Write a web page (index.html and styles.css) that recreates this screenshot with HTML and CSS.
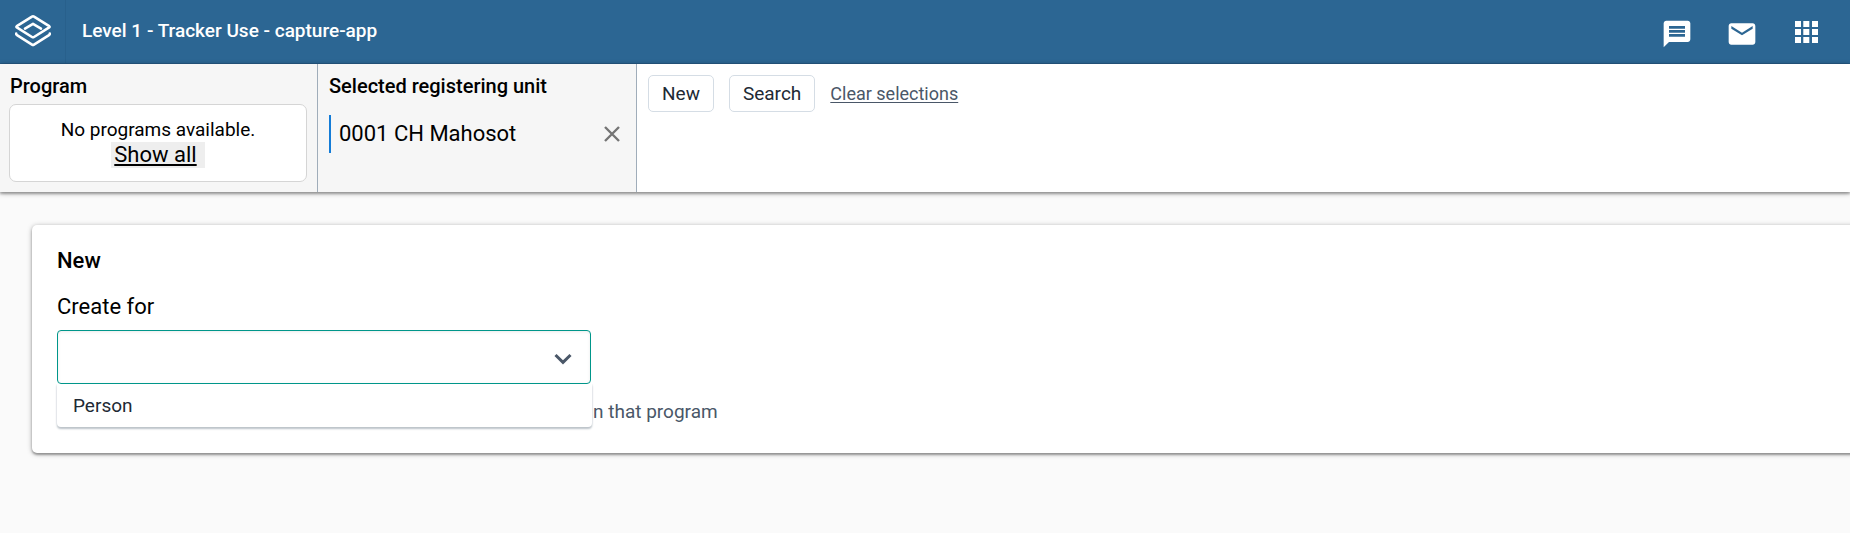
FILE: index.html
```html
<!DOCTYPE html>
<html lang="en">
<head>
<meta charset="utf-8">
<meta name="viewport" content="width=device-width, initial-scale=1">
<title>Level 1 - Tracker Use - capture-app</title>
<link rel="stylesheet" href="styles.css">
</head>
<body>
<header class="header">
  <a class="logo" href="#" aria-label="Home">
    <svg width="38" height="34" viewBox="0 0 38 34" fill="none" stroke="#fff" stroke-width="2.6" stroke-linejoin="round" stroke-linecap="round">
      <path d="M18 2.600Q19 2 20 2.600L35.200 12.200Q36 12.800 35.200 13.400L20 23Q19 23.600 18 23L2.800 13.400Q2 12.800 2.800 12.200Z"/>
      <path d="M11 14.600 19 9.800 27 14.600"/>
      <path d="M2.200 19.600Q2 20.600 3 21.200L18 30.600Q19 31.200 20 30.600L35 21.200Q36 20.600 35.800 19.600"/>
    </svg>
  </a>
  <h1 class="title">Level 1 - Tracker Use - capture-app</h1>
  <nav class="tools">
    <a class="tool" href="#" aria-label="Interpretations">
      <svg width="32" height="32" viewBox="0 0 24 24" fill="#fff"><path d="M4 2h16c1.100 0 2 .9 2 2v12c0 1.100-.9 2-2 2H6l-4 4V4c0-1.100.9-2 2-2zM6 6v2h12V6zm0 3v2h12V9zm0 3v2h12v-2z" fill-rule="evenodd"/></svg>
    </a>
    <a class="tool" href="#" aria-label="Messages">
      <svg width="32" height="32" viewBox="0 0 24 24" fill="#fff"><path d="M20 4H4c-1.100 0-2 .9-2 2v12c0 1.100.9 2 2 2h16c1.100 0 2-.9 2-2V6c0-1.100-.9-2-2-2zm0 4-8 5-8-5V6l8 5 8-5z"/></svg>
    </a>
    <button class="tool" type="button" aria-label="Apps">
      <svg width="32" height="32" viewBox="0 0 32 32" fill="#fff"><path d="M4 3h6v6H4zm8.300 0h6v6h-6zm8.700 0h6v6h-6zM4 11h6v6H4zm8.300 0h6v6h-6zm8.700 0h6v6h-6zM4 19h6v6H4zm8.300 0h6v6h-6zm8.700 0h6v6h-6z"/></svg>
    </button>
  </nav>
</header>
<section class="selector">
  <div class="cell">
    <h2 class="cell-title">Program</h2>
    <div class="no-programs">
      <span>No programs available.</span>
      <a class="show-all" href="#">Show all</a>
    </div>
  </div>
  <div class="cell">
    <h2 class="cell-title">Selected registering unit</h2>
    <div class="unit">
      <span class="unit-name">0001 CH Mahosot</span>
      <button class="clear" type="button" aria-label="Clear unit">
        <svg width="16" height="16" viewBox="0 0 16 16" fill="none" stroke="#757575" stroke-width="2.400"><path d="M1 1 15 15M15 1 1 15"/></svg>
      </button>
    </div>
  </div>
  <div class="actions">
    <button class="button" type="button">New</button>
    <button class="button" type="button">Search</button>
    <a class="clear-link" href="#">Clear selections</a>
  </div>
</section>
<main class="main">
  <section class="card">
    <h2 class="card-title">New</h2>
    <label class="label" for="type">Create for</label>
    <div class="combo">
      <input class="field" id="type" type="text" role="combobox" aria-expanded="true" aria-controls="types">
      <svg class="chevron" width="18" height="12" viewBox="0 0 18 12" fill="none" stroke="#4a5768" stroke-width="3"><path d="M1.500 2 9 9.300 16.500 2"/></svg>
      <ul class="menu" id="types" role="listbox">
        <li class="option" role="option">Person</li>
      </ul>
    </div>
    <p class="hint">n that program</p>
  </section>
</main>
</body>
</html>
```

FILE: styles.css
```css
* {
  box-sizing: border-box;
}

body {
  margin: 0;
  min-height: 100vh;
  background: #fafafa;
  color: #000;
  font-family: Roboto, "Liberation Sans", sans-serif;
  font-size: 19px;
  line-height: 24px;
  overflow-x: hidden;
}

button {
  font: inherit;
  cursor: pointer;
}

h1,
h2,
p,
ul {
  margin: 0;
  padding: 0;
}

.header {
  display: flex;
  align-items: stretch;
  height: 64px;
  background: #2c6693;
  border-bottom: 1px solid #265a84;
  color: #fff;
}

.logo {
  display: flex;
  align-items: center;
  justify-content: center;
  width: 66px;
  padding-bottom: 1px;
  border-right: 1px solid #28608c;
}

.title {
  align-self: center;
  padding: 0 0 2px 16px;
  font-size: 19px;
  font-weight: 500;
}

.tools {
  display: flex;
  align-items: center;
  gap: 33px;
  margin-left: auto;
  padding: 4px 27px 0 0;
}

.tool {
  display: flex;
  padding: 0;
  border: 0;
  background: none;
}

.selector {
  position: relative;
  display: flex;
  min-height: 128px;
  background: #fff;
  box-shadow: 0 1px 5px rgba(0, 0, 0, 0.4), 0 2px 2px rgba(0, 0, 0, 0.2);
}

.cell {
  width: 319px;
  padding: 10px 10px 10px 9px;
  background: #f6f6f6;
  border-right: 1px solid #a0adba;
}

.cell:first-child {
  width: 318px;
}

.cell-title {
  padding-left: 1px;
  font-size: 20px;
  font-weight: 500;
}

.cell + .cell .cell-title {
  padding-left: 2px;
}

.no-programs {
  display: flex;
  flex-direction: column;
  align-items: center;
  margin-top: 6px;
  padding: 13px 0 13px;
  border: 1px solid #d5d5d5;
  border-radius: 7px;
  background: #fff;
}

.show-all {
  padding: 0 8px 0 3px;
  background: #eee;
  color: #000;
  font-size: 22px;
  line-height: 26px;
}

.unit {
  display: flex;
  align-items: center;
  justify-content: space-between;
  margin: 17px 6px 0 2px;
  border-left: 2px solid #147cd7;
  height: 38px;
}

.unit-name {
  padding-left: 8px;
  font-size: 22px;
}

.clear {
  display: flex;
  padding: 0;
  border: 0;
  background: none;
}

.actions {
  display: flex;
  align-items: flex-start;
  gap: 15px;
  padding: 11px;
}

.button {
  height: 37px;
  padding: 0 13px;
  border: 1px solid #d5dde5;
  border-radius: 5px;
  background: #fff;
  color: #212934;
}

.clear-link {
  color: #4a5768;
  font-size: 18px;
  line-height: 37px;
  text-underline-offset: 2px;
}

.main {
  padding: 33px 0 32px 32px;
}

.card {
  margin-right: -32px;
  padding: 24px 25px 29px;
  border-radius: 5px;
  background: #fff;
  box-shadow: 0 1px 5px rgba(0, 0, 0, 0.35), 0 2px 2px rgba(0, 0, 0, 0.25);
}

.card-title {
  font-size: 22px;
  font-weight: 500;
}

.label {
  display: block;
  margin: 22px 0 11px;
  font-size: 22px;
}

.combo {
  position: relative;
  width: 534px;
}

.field {
  display: block;
  width: 100%;
  height: 54px;
  padding: 0 56px 0 16px;
  border: 1px solid #00968a;
  border-radius: 4px;
  outline: 0;
  background: #fff;
  font: inherit;
  box-shadow: inset 0 1px 3px rgba(48, 54, 60, 0.1);
}

.chevron {
  position: absolute;
  top: 23px;
  right: 19px;
}

.menu {
  position: absolute;
  top: 100%;
  left: 0;
  right: -1px;
  border-radius: 0 0 4px 4px;
  background: #fff;
  box-shadow: 0 2px 2px #bcc3c9, 0 0 2px #d5dae0;
  clip-path: inset(0 -4px -4px -4px);
  list-style: none;
}

.option {
  padding: 10px 16px 9px;
  color: #212934;
}

.hint {
  padding: 16px 0 0 536px;
  color: #4a5768;
}
```
